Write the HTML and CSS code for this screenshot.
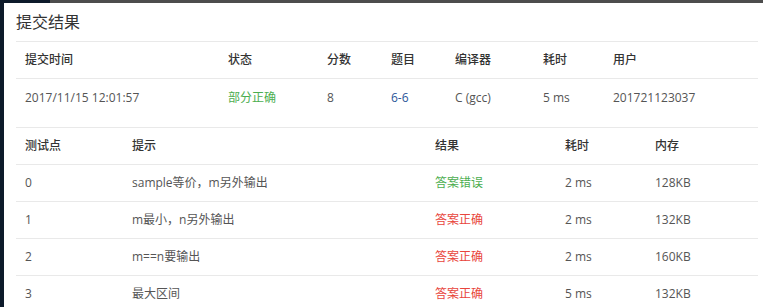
FILE: index.html
```html
<!DOCTYPE html>
<html lang="zh-CN">
<head>
  <meta charset="UTF-8" />
  <title>提交结果</title>
  <link rel="stylesheet" href="styles.css">
</head>
<body>

  <div class="top-strip"></div>

  <div class="modal">
    <h2 class="modal-title">提交结果</h2>

    <table class="result-table summary">
      <colgroup>
        <col style="width:203px">
        <col style="width:99px">
        <col style="width:64px">
        <col style="width:64px">
        <col style="width:88px">
        <col style="width:70px">
        <col>
      </colgroup>
      <thead>
        <tr>
          <th>提交时间</th>
          <th>状态</th>
          <th>分数</th>
          <th>题目</th>
          <th>编译器</th>
          <th>耗时</th>
          <th>用户</th>
        </tr>
      </thead>
      <tbody>
        <tr>
          <td>2017/11/15 12:01:57</td>
          <td class="status-green">部分正确</td>
          <td>8</td>
          <td><a href="#" class="problem-link">6-6</a></td>
          <td>C (gcc)</td>
          <td>5 ms</td>
          <td>201721123037</td>
        </tr>
      </tbody>
    </table>

    <table class="result-table cases">
      <colgroup>
        <col style="width:107px">
        <col style="width:303px">
        <col style="width:130px">
        <col style="width:90px">
        <col>
      </colgroup>
      <thead>
        <tr>
          <th>测试点</th>
          <th>提示</th>
          <th>结果</th>
          <th>耗时</th>
          <th>内存</th>
        </tr>
      </thead>
      <tbody>
        <tr>
          <td>0</td>
          <td>sample等价，m另外输出</td>
          <td class="status-green">答案错误</td>
          <td>2 ms</td>
          <td>128KB</td>
        </tr>
        <tr>
          <td>1</td>
          <td>m最小，n另外输出</td>
          <td class="status-red">答案正确</td>
          <td>2 ms</td>
          <td>132KB</td>
        </tr>
        <tr>
          <td>2</td>
          <td>m==n要输出</td>
          <td class="status-red">答案正确</td>
          <td>2 ms</td>
          <td>160KB</td>
        </tr>
        <tr>
          <td>3</td>
          <td>最大区间</td>
          <td class="status-red">答案正确</td>
          <td>5 ms</td>
          <td>132KB</td>
        </tr>
      </tbody>
    </table>
  </div>

</body>
</html>
```

FILE: styles.css
```css
body {
  margin: 0;
  padding-left: 4px;
  height: 307px;
  overflow: hidden;
  background-color: #0d1a2a;
  font-family: "Open Sans", "Noto Sans CJK SC", sans-serif;
  font-size: 12px;
  color: #555;
}

.top-strip {
  height: 3px;
  margin-left: 46px;
  background-color: #4d4d4d;
}

.modal {
  background: #fff;
  padding: 0 5px 0 12px;
  height: 304px;
}

.modal-title {
  margin: 0;
  padding: 8px 0 8px 0;
  font-size: 16px;
  line-height: 22px;
  font-weight: normal;
  color: #333;
}

.result-table {
  width: 100%;
  table-layout: fixed;
  border-collapse: collapse;
}

.result-table th,
.result-table td {
  text-align: left;
  padding: 8px 9px;
  line-height: 20px;
  border-top: 1px solid #e9e9e9;
  white-space: nowrap;
}

.result-table th {
  font-weight: 500;
  color: #333;
}

.summary {
  margin-bottom: 11px;
}

.summary tbody td {
  padding-top: 9px;
}

.status-green {
  color: #4cae4f;
}

.status-red {
  color: #e8453c;
}

.problem-link {
  color: #2a5699;
  text-decoration: none;
}
```
